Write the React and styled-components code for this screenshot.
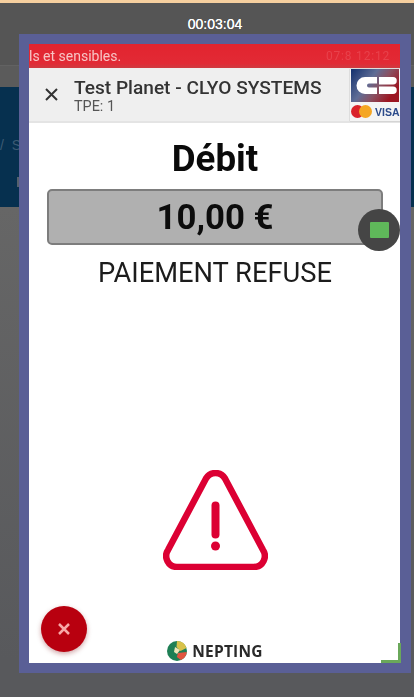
import React from 'react';
import styled, { createGlobalStyle } from 'styled-components';

const GlobalStyle = createGlobalStyle`
  html, body {
    margin: 0;
    padding: 0;
    background: #58595c;
    overflow: hidden;
  }
`;

const Page = styled.div`
  position: relative;
  width: 414px;
  height: 697px;
  overflow: hidden;
  display: flex;
  flex-direction: column;
  font-family: 'Roboto', sans-serif;
  background: linear-gradient(#666 207px, #58595c 660px);
`;

// page behind the modal
const PeachStrip = styled.div`
  height: 3px;
  background: #f6cf9f;
`;

const TopBar = styled.div`
  height: 63px;
  background: #555555;
  border-bottom: 1px solid #626262;
  box-sizing: border-box;
`;

const SubBar = styled.div`
  height: 21px;
  background: #5b5b5b;
`;

const Band = styled.div`
  height: 120px;
  background: #06304f;
  color: #3c5b74;
  font-family: 'Liberation Sans', sans-serif;
  font-size: 14px;
  padding: 50px 0 0 0;
  box-sizing: border-box;
  white-space: pre;
`;

const BandMark = styled.div`
  width: 2px;
  height: 10px;
  margin: 24px 0 0 17px;
  background: #55606c;
`;

// modal
const Frame = styled.div`
  position: absolute;
  top: 34px;
  left: 19px;
  width: 392px;
  height: 639px;
  box-sizing: border-box;
  padding: 10px 11px 10px 10px;
  background: #5a5f96;
`;

const Timer = styled.div`
  position: absolute;
  top: 16px;
  left: 0;
  width: 430px;
  text-align: center;
  color: #fff;
  font-family: 'Liberation Sans', sans-serif;
  font-size: 14px;
  line-height: 16px;
  text-shadow: 0 0 0.5px #fff;
`;

const Screen = styled.div`
  position: relative;
  height: 100%;
  display: flex;
  flex-direction: column;
  background: #fff;
  overflow: hidden;
  filter: blur(0.5px);
`;

const StatusBar = styled.div`
  height: 24px;
  flex: none;
  display: flex;
  align-items: center;
  justify-content: space-between;
  padding: 0 10px 0 0;
  background: linear-gradient(#e2242f, #e22a35 80%, #cf3a40);
  font-size: 14px;
`;

const Ticker = styled.span`
  color: #f7c4c4;
`;

const Clock = styled.span`
  color: #e8424c;
  font-size: 12px;
  letter-spacing: 0.8px;
`;

const Header = styled.div`
  height: 55px;
  flex: none;
  display: flex;
  align-items: center;
  background: #efefef;
  border-bottom: 2px solid #e4e4e4;
  box-sizing: border-box;
  padding-left: 16px;
`;

const CloseIcon = styled.svg`
  width: 13px;
  height: 13px;
  flex: none;
  margin-right: 16px;
`;

const Titles = styled.div`
  flex: 1;
  display: flex;
  flex-direction: column;
  padding-top: 3px;
`;

const Title = styled.div`
  font-size: 19.1px;
  font-weight: 500;
  line-height: 21px;
  color: #333;
  white-space: nowrap;
`;

const Terminal = styled.div`
  font-size: 14.4px;
  line-height: 17px;
  color: #555;
`;

const CardLogos = styled.div`
  width: 50px;
  height: 52px;
  flex: none;
  align-self: flex-start;
  margin-top: 1px;
  display: flex;
  flex-direction: column;
  background: #f4f4f4;
  box-shadow: 0 0 1px #888;
`;

const CardRow = styled.div`
  flex: 1;
  display: flex;
  align-items: center;
  gap: 3px;
  padding-left: 1px;
`;

const VisaText = styled.span`
  font-family: 'Liberation Sans', sans-serif;
  font-size: 10.5px;
  font-weight: 700;
  color: #2b4a8a;
`;

const Body = styled.div`
  flex: 1;
  display: flex;
  flex-direction: column;
  align-items: center;
  padding: 0 17px 0 18px;
`;

const Heading = styled.h1`
  margin: 15px 0 0;
  font-size: 36.7px;
  font-weight: 700;
  line-height: 41px;
  color: #0a0a0a;
`;

const AmountBox = styled.div`
  width: 336px;
  height: 56px;
  margin-top: 10px;
  box-sizing: border-box;
  display: flex;
  align-items: center;
  justify-content: center;
  background: #b0b0b0;
  border: 2px solid #7d7d7d;
  border-radius: 5px;
  font-size: 34.8px;
  font-weight: 700;
  color: #0c0c0c;
`;

const Message = styled.div`
  margin-top: 13px;
  font-size: 27.300px;
  line-height: 30px;
  color: #1c1c1c;
  white-space: nowrap;
`;

const WarningIcon = styled.svg`
  width: 105px;
  height: 100px;
  margin-top: 182px;
  flex: none;
`;

const Brand = styled.div`
  margin-top: auto;
  margin-bottom: 1px;
  display: flex;
  align-items: center;
  gap: 5px;
  font-family: 'Open Sans', sans-serif;
  font-size: 15.5px;
  font-weight: 700;
  line-height: 22px;
  color: #2a2a2a;
  letter-spacing: 0.2px;
`;

const CancelButton = styled.div`
  position: absolute;
  left: 12px;
  bottom: 11px;
  width: 46px;
  height: 46px;
  border-radius: 50%;
  display: flex;
  align-items: center;
  justify-content: center;
  background: #b8000f;
  box-shadow: 0 2px 5px rgba(120, 0, 10, 0.35);
`;

const ChatBubble = styled.div`
  position: absolute;
  top: 209px;
  left: 358px;
  width: 42px;
  height: 42px;
  border-radius: 50%;
  display: flex;
  align-items: center;
  justify-content: center;
  background: #454545;
  filter: blur(0.5px);
`;

const ChatScreen = styled.div`
  width: 19px;
  height: 16px;
  border-radius: 1px;
  background: #5fb85a;
`;

const CornerMark = styled.div`
  position: absolute;
  top: 643px;
  left: 381px;
  width: 20px;
  height: 20px;
  box-sizing: border-box;
  border-right: 3px solid #6aa85a;
  border-bottom: 3px solid #6aa85a;
`;

const CbLogo = () => (
  <svg width="48" height="33" viewBox="0 0 48 33" style={{ margin: '0 1px', flex: 'none' }}>
    <defs>
      <linearGradient id="cbBack" x1="0" y1="0" x2="1" y2="0.5">
        <stop offset="0" stopColor="#12306e" />
        <stop offset="0.45" stopColor="#5f6d96" />
        <stop offset="0.7" stopColor="#8a4f60" />
        <stop offset="1" stopColor="#9c1622" />
      </linearGradient>
    </defs>
    <rect width="48" height="33" fill="url(#cbBack)" />
    <path d="M26 8H14a8.500 8.500 0 0 0 0 17h12v-6.500H18a2 2 0 0 1 0-4h8z" fill="#fff" />
    <path d="M28 8h14a3.500 3.500 0 0 1 0 7.500H28zM28 17.500h14a3.700 3.700 0 0 1 0 7.500H28z" fill="#fff" />
  </svg>
);

const MastercardMark = () => (
  <svg width="21" height="13" viewBox="0 0 21 13">
    <circle cx="6.500" cy="6.500" r="6.500" fill="#d9222a" />
    <circle cx="14.500" cy="6.500" r="6.500" fill="#f5a623" />
  </svg>
);

const NeptingGlobe = () => (
  <svg width="20" height="20" viewBox="0 0 20 20">
    <circle cx="10" cy="10" r="10" fill="#1e7f55" />
    <path d="M10 0a10 10 0 0 1 9.500 7l-6 3-4-4z" fill="#d8c24a" />
    <path d="M11 12l8.800-1a10 10 0 0 1-6 8l-4-3z" fill="#e2543f" />
    <path d="M8 6l5 3-3 4-3-2z" fill="#eee7b8" />
  </svg>
);

const App = () => (
  <Page>
    <GlobalStyle />
    <PeachStrip />
    <TopBar />
    <SubBar />
    <Band>
      {'/  S'}
      <BandMark />
    </Band>
    <Frame>
      <Screen>
        <StatusBar>
          <Ticker>ls et sensibles.</Ticker>
          <Clock>07:8 12:12</Clock>
        </StatusBar>
        <Header>
          <CloseIcon viewBox="0 0 13 13">
            <path d="M1 1l11 11M12 1L1 12" stroke="#333" strokeWidth="2" fill="none" />
          </CloseIcon>
          <Titles>
            <Title>Test Planet - CLYO SYSTEMS</Title>
            <Terminal>TPE: 1</Terminal>
          </Titles>
          <CardLogos>
            <CbLogo />
            <CardRow>
              <MastercardMark />
              <VisaText>VISA</VisaText>
            </CardRow>
          </CardLogos>
        </Header>
        <Body>
          <Heading>Débit</Heading>
          <AmountBox>10,00 €</AmountBox>
          <Message>PAIEMENT REFUSE</Message>
          <WarningIcon viewBox="0 0 105 100">
            <path
              d="M43 8.500a11 11 0 0 1 19 0L100 80a11 11 0 0 1-9 17H14a11 11 0 0 1-9-17z"
              fill="none"
              stroke="#dc0033"
              strokeWidth="6.500"
              strokeLinejoin="round"
            />
            <path d="M52.500 35.500v29" stroke="#dc0033" strokeWidth="8" strokeLinecap="round" />
            <circle cx="52.500" cy="76" r="4.500" fill="#dc0033" />
          </WarningIcon>
          <Brand>
            <NeptingGlobe />
            NEPTING
          </Brand>
        </Body>
        <CancelButton>
          <svg width="14" height="14" viewBox="0 0 14 14">
            <path d="M2 2l10 10M12 2L2 12" stroke="#f8a9a9" strokeWidth="2.500" fill="none" />
          </svg>
        </CancelButton>
      </Screen>
    </Frame>
    <Timer>00:03:04</Timer>
    <ChatBubble>
      <ChatScreen />
    </ChatBubble>
    <CornerMark />
  </Page>
);

export default App;
